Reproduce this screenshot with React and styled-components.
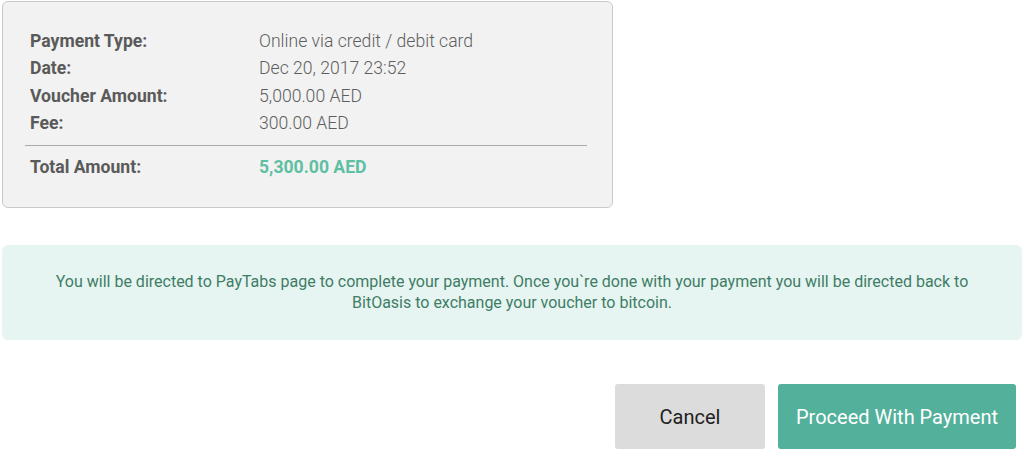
import React from 'react';
import styled, { createGlobalStyle } from 'styled-components';

const GlobalStyle = createGlobalStyle`
  body {
    margin: 0;
    background: #fff;
    font-family: Roboto, "Liberation Sans", sans-serif;
  }
`;

const Page = styled.div`
  width: 1024px;
  height: 470px;
  padding: 1px 2px 0 2px;
  box-sizing: border-box;
  display: flex;
  flex-direction: column;
`;

const Summary = styled.div`
  width: 611px;
  height: 207px;
  box-sizing: border-box;
  background: #f2f2f2;
  border: 1px solid #c9c9c9;
  border-radius: 6px;
  padding: 25px 25px 0 22px;
`;

const Row = styled.div`
  display: grid;
  grid-template-columns: 229px 1fr;
  height: 27.5px;
  align-items: center;
  font-size: 17.6px;
  padding-left: 5px;
`;

const Label = styled.span`
  color: #5a5a5a;
  font-weight: 700;
`;

const Value = styled.span`
  font-weight: ${({ $accent }) => ($accent ? 700 : 300)};
  color: ${({ $accent }) => ($accent ? '#5fbfa3' : '#5e5e5e')};
`;

const Divider = styled.hr`
  border: 0;
  border-top: 1px solid #a9a9a9;
  margin: 8px 0 7px 0;
`;

const Notice = styled.div`
  margin-top: 37px;
  width: 1020px;
  height: 95px;
  box-sizing: border-box;
  background: #e6f5f1;
  border-radius: 6px;
  display: flex;
  align-items: center;
  justify-content: center;
  text-align: center;
  color: #3f7c66;
  font-size: 16px;
  line-height: 21px;
  font-weight: 400;
  padding: 0 30px 1px;
`;

const Actions = styled.div`
  margin-top: 44px;
  display: flex;
  justify-content: flex-end;
  gap: 13px;
  padding-right: 6px;
`;

const Button = styled.button`
  height: 65px;
  border: 0;
  border-radius: 3px;
  font-family: Roboto, "Liberation Sans", sans-serif;
  font-size: 20px;
  font-weight: 400;
  cursor: pointer;
  width: ${({ $primary }) => ($primary ? '238px' : '150px')};
  background: ${({ $primary }) => ($primary ? '#52b09b' : '#dcdcdc')};
  color: ${({ $primary }) => ($primary ? '#ffffff' : '#222222')};
`;

const rows = [
  ['Payment Type:', 'Online via credit / debit card'],
  ['Date:', 'Dec 20, 2017 23:52'],
  ['Voucher Amount:', '5,000.00 AED'],
  ['Fee:', '300.00 AED'],
];

export default function App() {
  return (
    <>
      <GlobalStyle />
      <Page>
        <Summary>
          {rows.map(([label, value]) => (
            <Row key={label}>
              <Label>{label}</Label>
              <Value>{value}</Value>
            </Row>
          ))}
          <Divider />
          <Row>
            <Label>Total Amount:</Label>
            <Value $accent>5,300.00 AED</Value>
          </Row>
        </Summary>
        <Notice>
          You will be directed to PayTabs page to complete your payment. Once you`re done with your payment you will be directed back to
          <br />
          BitOasis to exchange your voucher to bitcoin.
        </Notice>
        <Actions>
          <Button>Cancel</Button>
          <Button $primary>Proceed With Payment</Button>
        </Actions>
      </Page>
    </>
  );
}
